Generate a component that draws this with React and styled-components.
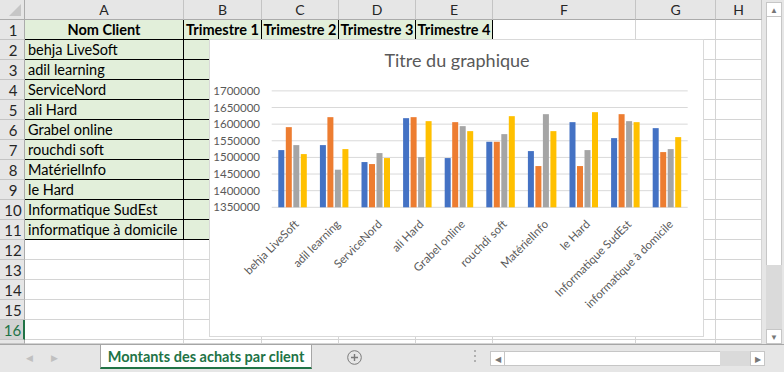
import React from "react";
import styled, { createGlobalStyle } from "styled-components";

const GlobalStyle = createGlobalStyle`
  html, body {
    margin: 0;
    padding: 0;
    background: #e6e6e6;
  }
  body {
    font-family: Lato, "Liberation Sans", sans-serif;
  }
`;

const COLS = [
  { key: "A", width: 159 },
  { key: "B", width: 78 },
  { key: "C", width: 77 },
  { key: "D", width: 77 },
  { key: "E", width: 77 },
  { key: "F", width: 143 },
  { key: "G", width: 80 },
  { key: "H", width: 46 },
];

const CLIENTS = [
  ["behja LiveSoft", 1522000, 1591000, 1537000, 1510000],
  ["adil learning", 1537000, 1621000, 1463000, 1525000],
  ["ServiceNord", 1486000, 1480000, 1513000, 1498000],
  ["ali Hard", 1618000, 1621000, 1501000, 1609000],
  ["Grabel online", 1498000, 1606000, 1594000, 1579000],
  ["rouchdi soft", 1547000, 1547000, 1570000, 1624000],
  ["MatérielInfo", 1519000, 1474000, 1630000, 1579000],
  ["le Hard", 1606000, 1474000, 1522000, 1636000],
  ["Informatique SudEst", 1558000, 1630000, 1609000, 1606000],
  ["informatique à domicile", 1588000, 1516000, 1525000, 1561000],
];

const SERIES = ["#4472c4", "#ed7d31", "#a5a5a5", "#ffc000"];

const Workbook = styled.div`
  width: 784px;
  height: 372px;
  display: flex;
  flex-direction: column;
  background: #e6e6e6;
  overflow: hidden;
`;

const SheetArea = styled.div`
  display: flex;
  height: 344px;
`;

const GridWrap = styled.div`
  position: relative;
  width: 762px;
  height: 344px;
  background: #fff;
  overflow: hidden;
`;

const Grid = styled.div`
  display: grid;
  grid-template-columns: 25px ${COLS.map((c) => c.width + "px").join(" ")};
  grid-template-rows: 20px repeat(16, 20px) 4px;
`;

const Corner = styled.div`
  position: relative;
  background: #e6e6e6;
  border-right: 1px solid #ababab;
  border-bottom: 1px solid #ababab;
  &::after {
    content: "";
    position: absolute;
    right: 3px;
    bottom: 3px;
    border-left: 12px solid transparent;
    border-bottom: 12px solid #c6c6c6;
  }
`;

const ColHeader = styled.div`
  background: #e6e6e6;
  border-right: 1px solid #c4c4c4;
  border-bottom: 1px solid #ababab;
  display: flex;
  align-items: center;
  justify-content: center;
  font-size: 14px;
  color: #262626;
  white-space: nowrap;
  overflow: hidden;
`;

const RowHeader = styled.div`
  background: ${(p) => (p.$active ? "#d2d2d2" : "#e6e6e6")};
  color: ${(p) => (p.$active ? "#217346" : "#262626")};
  border-right: ${(p) => (p.$active ? "2px solid #217346" : "1px solid #ababab")};
  border-bottom: 1px solid #c4c4c4;
  display: flex;
  align-items: center;
  justify-content: center;
  font-size: 15px;
  padding-left: 2px;
`;

const Cell = styled.div`
  background: ${(p) => (p.$fill ? "#e2efda" : "#fff")};
  border-right: 1px solid ${(p) => (p.$boxed ? "#000" : "#d4d4d4")};
  border-bottom: 1px solid ${(p) => (p.$boxed ? "#000" : "#d4d4d4")};
  font-size: 14.5px;
  font-weight: ${(p) => (p.$bold ? 700 : 400)};
  color: #000;
  display: flex;
  align-items: center;
  justify-content: ${(p) => (p.$center ? "center" : "flex-start")};
  padding-left: ${(p) => (p.$center ? "0" : "3px")};
  white-space: nowrap;
  overflow: hidden;
  box-sizing: border-box;
`;

const ChartFrame = styled.div`
  position: absolute;
  left: 209px;
  top: 39px;
  width: 495px;
  height: 298px;
  box-sizing: border-box;
  background: #fff;
  border: 1px solid #d9d9d9;
`;

const ChartSvg = styled.svg`
  display: block;
  font-family: Lato, "Liberation Sans", sans-serif;
`;

const VScroll = styled.div`
  width: 22px;
  display: flex;
  flex-direction: column;
  padding: 2px 2px 0 4px;
  box-sizing: border-box;
`;

const ScrollBtn = styled.div`
  flex: none;
  width: ${(p) => (p.$h ? "15px" : "16px")};
  height: 15px;
  box-sizing: border-box;
  background: #fff;
  border: 1px solid #c6c6c6;
  display: flex;
  align-items: center;
  justify-content: center;
  font-size: 8px;
  color: #777;
  line-height: 1;
`;

const Thumb = styled.div`
  flex: ${(p) => p.$size};
  background: #fff;
  border: 1px solid #c6c6c6;
  border-top: none;
  border-bottom: none;
`;

const Track = styled.div`
  flex: ${(p) => p.$size};
  background: #dadada;
`;

const TabBar = styled.div`
  display: flex;
  align-items: flex-start;
  height: 28px;
  box-sizing: border-box;
  border-top: 1px solid #a6a6a6;
  background: #e6e6e6;
`;

const NavArea = styled.div`
  width: 100px;
  height: 25px;
  display: flex;
  align-items: center;
  gap: 18px;
  padding-left: 26px;
  box-sizing: border-box;
  color: #c0c0c0;
  font-size: 9px;
`;

const SheetTab = styled.div`
  width: 212px;
  height: 25px;
  box-sizing: border-box;
  margin-top: -1px;
  background: #fff;
  border: 1px solid #a6a6a6;
  border-bottom: 2px solid #217346;
  display: flex;
  align-items: center;
  justify-content: center;
  font-size: 14.5px;
  font-weight: 700;
  color: #217346;
  white-space: nowrap;
`;

const AddSheet = styled.div`
  margin-left: 35px;
  margin-top: 5px;
  width: 15px;
  height: 15px;
  display: flex;
`;

const Dots = styled.div`
  margin-left: 112px;
  margin-top: 5px;
  display: flex;
  flex-direction: column;
  gap: 3px;
  span {
    width: 2px;
    height: 2px;
    background: #b0b0b0;
  }
`;

const HScroll = styled.div`
  margin-left: 14px;
  margin-top: 6px;
  width: 275px;
  height: 15px;
  display: flex;
`;

const HThumb = styled.div`
  flex: ${(p) => p.$size};
  background: #fff;
  border-top: 1px solid #c6c6c6;
  border-bottom: 1px solid #c6c6c6;
`;

const HTrack = styled.div`
  flex: ${(p) => p.$size};
  background: #dadada;
`;

const rows = Array.from({ length: 16 }, (_, i) => i + 1);

const cellProps = (row, col) => {
  const ci = COLS.findIndex((c) => c.key === col);
  if (row === 1 && ci <= 4) {
    const text = ci === 0 ? "Nom Client" : `Trimestre ${ci}`;
    return { text, $fill: true, $boxed: true, $bold: true, $center: true };
  }
  if (row >= 2 && row <= 11 && ci <= 4) {
    return { text: ci === 0 ? CLIENTS[row - 2][0] : "", $fill: true, $boxed: true };
  }
  return { text: "" };
};

const Chart = () => {
  const W = 493;
  const H = 296;
  const left = 61.7;
  const right = 477.7;
  const base = 167.3;
  const step = 16.63;
  const catW = (right - left) / CLIENTS.length;
  const yOf = (v) => base - ((v - 1350000) / 50000) * step;
  const ticks = [1350000, 1400000, 1450000, 1500000, 1550000, 1600000, 1650000, 1700000];

  return (
    <ChartSvg width={W} height={H} viewBox={`0 0 ${W} ${H}`}>
      <text x={247} y={27} fontSize="18" fill="#595959" textAnchor="middle">
        Titre du graphique
      </text>
      {ticks.map((t) => (
        <g key={t}>
          <line x1={left} x2={right} y1={yOf(t)} y2={yOf(t)} stroke="#d9d9d9" strokeWidth="1" />
          <text x={50} y={yOf(t) + 4} fontSize="11.5" fill="#595959" textAnchor="end">
            {t}
          </text>
        </g>
      ))}
      {CLIENTS.map(([name, ...vals], i) => {
        const cx = left + catW * (i + 0.5);
        const lx = cx + 7;
        const ly = 185;
        return (
          <g key={name}>
            {vals.map((v, s) => (
              <rect
                key={s}
                x={cx - 14.2 + s * 7.5}
                y={yOf(v)}
                width={6}
                height={base - yOf(v)}
                fill={SERIES[s]}
              />
            ))}
            <text
              x={lx}
              y={ly}
              fontSize="11.5"
              fill="#595959"
              textAnchor="end"
              transform={`rotate(-45 ${lx} ${ly})`}
            >
              {name}
            </text>
          </g>
        );
      })}
    </ChartSvg>
  );
};

const PlusIcon = () => (
  <svg width="15" height="15" viewBox="0 0 15 15">
    <circle cx="7.5" cy="7.5" r="6.8" fill="none" stroke="#7a7a7a" strokeWidth="1" />
    <path d="M7.5 4v7M4 7.5h7" stroke="#7a7a7a" strokeWidth="1.4" />
  </svg>
);

export default function App() {
  return (
    <>
      <GlobalStyle />
      <Workbook>
        <SheetArea>
          <GridWrap>
            <Grid>
              <Corner />
              {COLS.map((c) => (
                <ColHeader key={c.key}>{c.key}</ColHeader>
              ))}
              {rows.map((r) => (
                <React.Fragment key={r}>
                  <RowHeader $active={r === 16}>{r}</RowHeader>
                  {COLS.map((c) => {
                    const { text, ...p } = cellProps(r, c.key);
                    return (
                      <Cell key={c.key} {...p}>
                        {text}
                      </Cell>
                    );
                  })}
                </React.Fragment>
              ))}
              <RowHeader />
              {COLS.map((c) => (
                <Cell key={c.key} />
              ))}
            </Grid>
            <ChartFrame>
              <Chart />
            </ChartFrame>
          </GridWrap>
          <VScroll>
            <ScrollBtn>▲</ScrollBtn>
            <Thumb $size={249} />
            <Track $size={64} />
            <ScrollBtn>▼</ScrollBtn>
          </VScroll>
        </SheetArea>
        <TabBar>
          <NavArea>
            <span>◀</span>
            <span>▶</span>
          </NavArea>
          <SheetTab>Montants des achats par client</SheetTab>
          <AddSheet>
            <PlusIcon />
          </AddSheet>
          <Dots>
            <span />
            <span />
            <span />
          </Dots>
          <HScroll>
            <ScrollBtn $h>◀</ScrollBtn>
            <HThumb $size={216} />
            <HTrack $size={30} />
            <ScrollBtn $h>▶</ScrollBtn>
          </HScroll>
        </TabBar>
      </Workbook>
    </>
  );
}
